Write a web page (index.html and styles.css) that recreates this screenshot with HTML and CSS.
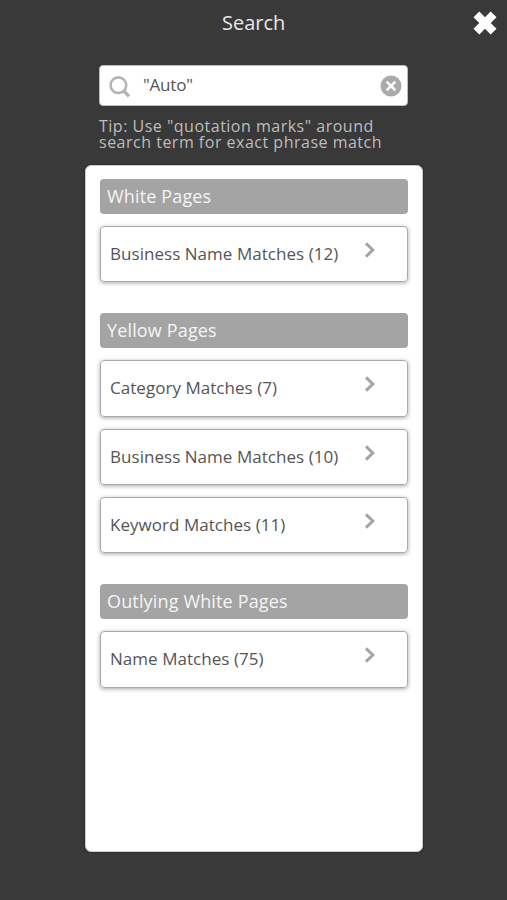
FILE: index.html
```html
<!DOCTYPE html>
<html lang="en">
<head>
<meta charset="utf-8">
<title>Search</title>
<link rel="stylesheet" href="styles.css">
</head>
<body>
<header class="topbar">
  <h1 class="title">Search</h1>
  <svg class="close" viewBox="0 0 26 26"><path d="M4.4 4.4 21.6 21.6M21.6 4.4 4.4 21.6" stroke="#fff" stroke-width="8.2"/></svg>
</header>
<div class="search">
  <svg class="glass" viewBox="0 0 24 24"><circle cx="9.4" cy="10.2" r="7.8" fill="none" stroke="#b4b4b4" stroke-width="2.6"/><path d="M14.8 16 20 21.4" stroke="#b4b4b4" stroke-width="3.4"/></svg>
  <span class="term">"Auto"</span>
  <svg class="clear" viewBox="0 0 22 22"><circle cx="11" cy="11" r="10.5" fill="#aaa"/><path d="M6.6 6.6 15.4 15.4M15.4 6.6 6.6 15.4" stroke="#fff" stroke-width="2.6"/></svg>
</div>
<p class="tip"><span class="line">Tip: Use "quotation marks" around</span><span class="line">search term for exact phrase match</span></p>
<main class="panel">
  <section class="group">
    <h2 class="heading">White Pages</h2>
    <div class="card"><span>Business Name Matches (12)</span><svg class="chev" viewBox="0 0 12 16"><path d="M2 1.4 8.8 8 2 14.6"/></svg></div>
  </section>
  <section class="group">
    <h2 class="heading">Yellow Pages</h2>
    <div class="card"><span>Category Matches (7)</span><svg class="chev" viewBox="0 0 12 16"><path d="M2 1.4 8.8 8 2 14.6"/></svg></div>
    <div class="card"><span>Business Name Matches (10)</span><svg class="chev" viewBox="0 0 12 16"><path d="M2 1.4 8.8 8 2 14.6"/></svg></div>
    <div class="card"><span>Keyword Matches (11)</span><svg class="chev" viewBox="0 0 12 16"><path d="M2 1.4 8.8 8 2 14.6"/></svg></div>
  </section>
  <section class="group">
    <h2 class="heading">Outlying White Pages</h2>
    <div class="card"><span>Name Matches (75)</span><svg class="chev" viewBox="0 0 12 16"><path d="M2 1.4 8.8 8 2 14.6"/></svg></div>
  </section>
</main>
</body>
</html>
```
FILE: styles.css
```css
* { box-sizing: border-box; }
body {
  margin: 0;
  height: 900px;
  overflow: hidden;
  background: #393939;
  font-family: "Open Sans", sans-serif;
  color: #555;
}
svg { display: block; flex: none; }
.topbar {
  height: 65px;
  padding: 10px 9px 0 0;
  display: grid;
  grid-template-columns: 222px 1fr 26px;
  align-items: start;
}
.title {
  grid-column: 2;
  margin: 0;
  font-size: 20px;
  line-height: 26px;
  font-weight: 400;
  color: #e8e8e8;
}
.close { width: 26px; height: 26px; }
.search {
  width: 309px;
  height: 41px;
  margin-left: 99px;
  padding: 0 5px 0 9px;
  display: flex;
  align-items: center;
  background: #fff;
  border: 1px solid #bbb;
  border-radius: 4px;
}
.glass { width: 24px; height: 24px; margin-top: 3px; }
.term { flex: 1; margin-left: 10px; font-size: 17px; line-height: 24px; padding-bottom: 1px; letter-spacing: -0.2px; }
.clear { width: 22px; height: 22px; }
.tip {
  margin: 12px 0 0 99px;
  font-size: 16px;
  line-height: 16px;
  letter-spacing: 0.5px;
  color: #bdbdbd;
  white-space: nowrap;
}
.line { display: block; }
.panel {
  width: 338px;
  height: 687px;
  margin: 14.5px 0 0 85px;
  padding: 13.1px 14px 0;
  background: #fff;
  border: 1px solid #ccc;
  border-radius: 6px;
  box-shadow: 0 0 2px #1c1c1c;
}
.group { margin-bottom: 30.4px; }
.heading {
  margin: 0;
  height: 35.4px;
  padding-left: 7px;
  background: #a4a4a4;
  border-radius: 4px;
  font-size: 18px;
  font-weight: 400;
  line-height: 35px;
  letter-spacing: 0.15px;
  color: #f5f5f5;
}
.card {
  height: 56.4px;
  margin-top: 12px;
  padding: 0 31px 1px 9px;
  display: flex;
  align-items: center;
  border: 1px solid #aaa;
  border-radius: 4px;
  box-shadow: 0 1px 4px rgba(0, 0, 0, 0.35);
  font-size: 17px;
  letter-spacing: 0.04px;
}
.chev { width: 12px; height: 16px; margin: 0 0 7px auto; }
.chev path { fill: none; stroke: #a4a4a4; stroke-width: 3; }
```
